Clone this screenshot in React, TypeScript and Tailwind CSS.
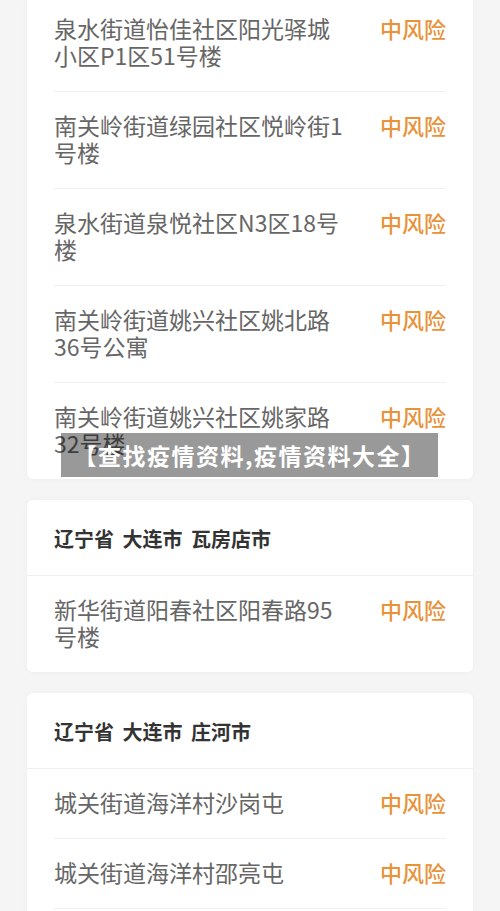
import React from "react";

type Row = { name: string; level: string };
type Area = { title?: string; rows: Row[]; last?: boolean };

const areas: Area[] = [
  {
    rows: [
      { name: "泉水街道怡佳社区阳光驿城小区P1区51号楼", level: "中风险" },
      { name: "南关岭街道绿园社区悦岭街1号楼", level: "中风险" },
      { name: "泉水街道泉悦社区N3区18号楼", level: "中风险" },
      { name: "南关岭街道姚兴社区姚北路36号公寓", level: "中风险" },
      { name: "南关岭街道姚兴社区姚家路32号楼", level: "中风险" },
    ],
  },
  {
    title: "辽宁省 大连市 瓦房店市",
    rows: [{ name: "新华街道阳春社区阳春路95号楼", level: "中风险" }],
  },
  {
    title: "辽宁省 大连市 庄河市",
    last: true,
    rows: [
      { name: "城关街道海洋村沙岗屯", level: "中风险" },
      { name: "城关街道海洋村邵亮屯", level: "中风险" },
      { name: "城关街道海洋村沙岗屯", level: "中风险" },
    ],
  },
];

const AreaCard = ({ area }: { area: Area }) => {
  return (
    <div className="bg-white rounded-[6px] shadow-[0_0_6px_rgba(0,0,0,0.03)]">
      {area.title && (
        <div className="px-[27px] pt-[25px] pb-[23px] border-b border-[#f0f0f0] text-[20px] leading-[27px] font-bold text-[#333] [word-spacing:4px]">
          {area.title}
        </div>
      )}
      <div className="px-[27px]">
        {area.rows.map((row, i) => {
          const isLast = i === area.rows.length - 1 && !area.last;
          return (
            <div
              key={i}
              className={
                isLast
                  ? "flex justify-between items-start pt-[20px] pb-[22px]"
                  : "flex justify-between items-start pt-[20px] pb-[22px] border-b border-[#efefef]"
              }
            >
              <div className="max-w-[294px] text-[23px] leading-[27px] text-[#666]">
                {row.name}
              </div>
              <div className="text-[22px] leading-[27px] font-medium text-[#e8923a] shrink-0">
                {row.level}
              </div>
            </div>
          );
        })}
      </div>
    </div>
  );
};

export default function App() {
  return (
    <div
      className="relative h-[911px] overflow-hidden bg-[#f5f5f5] px-[27px]"
      style={{ fontFamily: '"Noto Sans CJK SC", "Noto Sans", sans-serif' }}
    >
      <div className="-mt-[5px] flex flex-col gap-[21px]">
        {areas.map((area, i) => (
          <AreaCard key={i} area={area} />
        ))}
      </div>

      {/* title banner over the list */}
      <div className="absolute top-[433px] left-[61px] w-[377px] h-[44px] bg-black/40 flex items-center justify-center">
        <span className="text-white font-bold text-[23px] tracking-[1.5px] leading-none">
          【查找疫情资料,疫情资料大全】
        </span>
      </div>
    </div>
  );
}
